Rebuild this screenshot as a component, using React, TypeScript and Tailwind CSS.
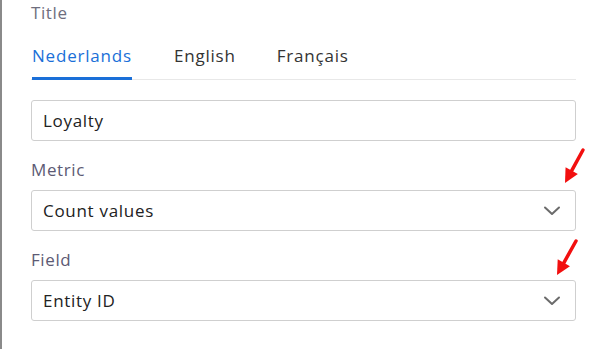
import React from "react";

const Chevron = () => (
  <svg width="20" height="12" viewBox="0 0 20 12" fill="none" className="shrink-0">
    <path d="M3 2.5 L10 9 L17 2.5" stroke="#6b6b6b" strokeWidth="2" strokeLinecap="round" strokeLinejoin="round" />
  </svg>
);

const Arrow = ({ x1, y1, x2, y2 }: { x1: number; y1: number; x2: number; y2: number }) => {
  const ang = Math.atan2(y2 - y1, x2 - x1);
  const len = 14;
  const w = 7;
  const bx = x2 - len * Math.cos(ang);
  const by = y2 - len * Math.sin(ang);
  const px = -Math.sin(ang) * w;
  const py = Math.cos(ang) * w;
  return (
    <g>
      <line x1={x1} y1={y1} x2={bx} y2={by} stroke="#f20f0f" strokeWidth="3.5" strokeLinecap="round" />
      <polygon points={`${x2},${y2} ${bx + px},${by + py} ${bx - px},${by - py}`} fill="#f20f0f" />
    </g>
  );
};

export default function App() {
  return (
    <div
      className="relative w-[605px] h-[349px] bg-white overflow-hidden border-l-2 border-[#8a8a8a]"
      style={{ fontFamily: '"Open Sans", "Noto Sans", sans-serif' }}
    >
      <div className="pl-[29px] pr-[29px] pt-0">
        <div className="h-[26px] flex items-center text-[17px] tracking-[0.6px] text-[#6e6e7e]">Title</div>
        <div className="mt-[14px] flex items-end border-b border-[#e8e8e8] h-[40px]">
          <div className="px-[1px] h-full flex flex-col justify-between">
            <div className="text-[17px] text-[#1a6fd8] tracking-[0.8px] pt-[3px]">Nederlands</div>
            <div className="h-[3px] bg-[#1a6fd8] -mb-[1px]"></div>
          </div>
          <div className="ml-[41px] h-full pt-[3px] text-[17px] text-[#333] tracking-[0.8px]">English</div>
          <div className="ml-[41px] h-full pt-[3px] text-[17px] text-[#333] tracking-[0.8px]">Français</div>
        </div>
        <div className="mt-[20px] h-[41px] border border-[#cfcfcf] rounded-[3px] flex items-center px-[11px] text-[17px] text-[#222] tracking-[0.7px]">
          Loyalty
        </div>
        <div className="mt-[17px] h-[24px] flex items-center text-[17px] text-[#5c5a74] tracking-[0.6px]">Metric</div>
        <div className="mt-[8px] h-[41px] border border-[#cfcfcf] rounded-[3px] flex items-center justify-between pl-[11px] pr-[13px] text-[17px] text-[#222] tracking-[0.7px]">
          <span>Count values</span>
          <Chevron />
        </div>
        <div className="mt-[17px] h-[24px] flex items-center text-[17px] text-[#5c5a74] tracking-[0.6px]">Field</div>
        <div className="mt-[8px] h-[41px] border border-[#cfcfcf] rounded-[3px] flex items-center justify-between pl-[11px] pr-[13px] text-[17px] text-[#222] tracking-[0.7px]">
          <span>Entity ID</span>
          <Chevron />
        </div>
      </div>
      <svg className="absolute left-0 top-0 pointer-events-none" width="605" height="349">
        <Arrow x1={581} y1={150} x2={563} y2={183} />
        <Arrow x1={574} y1={241} x2={555} y2={275} />
      </svg>
    </div>
  );
}
